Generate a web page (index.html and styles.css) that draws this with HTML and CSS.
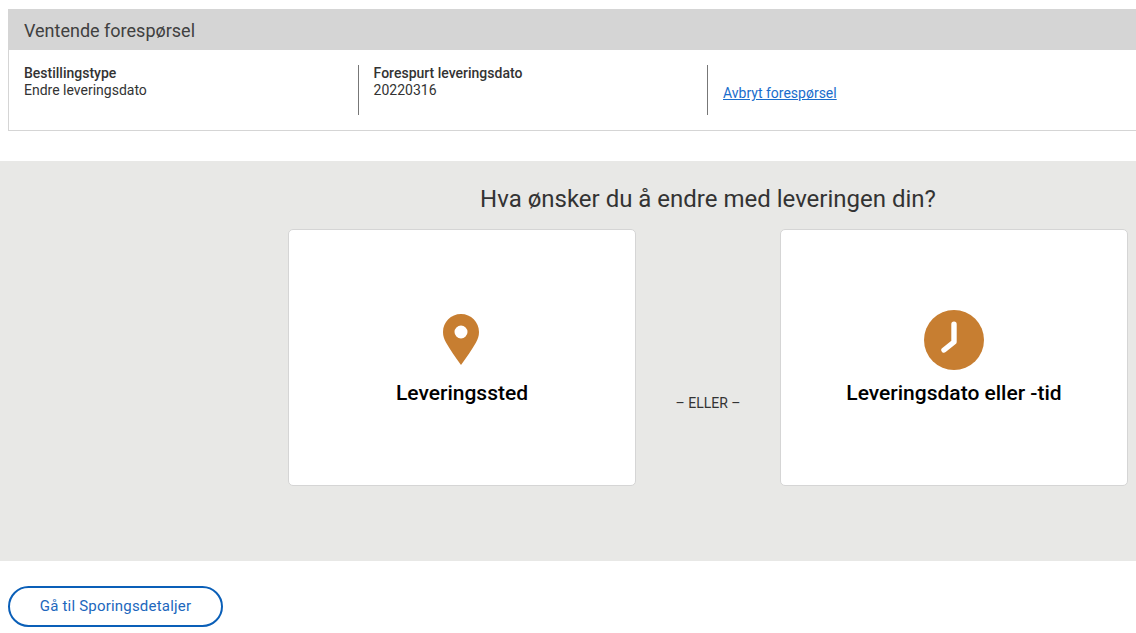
FILE: index.html
```
<!DOCTYPE html>
<html lang="no">
<head>
<meta charset="utf-8">
<title>Endre levering</title>
<link rel="stylesheet" href="styles.css">
</head>
<body>
<section class="pending">
  <h2 class="pending-head">Ventende forespørsel</h2>
  <div class="pending-body">
    <div class="col col-first">
      <div class="label">Bestillingstype</div>
      <div class="value">Endre leveringsdato</div>
    </div>
    <div class="col">
      <div class="label">Forespurt leveringsdato</div>
      <div class="value">20220316</div>
    </div>
    <div class="col col-link">
      <a class="link" href="#">Avbryt forespørsel</a>
    </div>
  </div>
</section>
<section class="change">
  <h1 class="change-title">Hva ønsker du å endre med leveringen din?</h1>
  <div class="options">
    <a class="card" href="#">
      <svg class="pin" width="36" height="52" viewBox="0 0 36 52" aria-hidden="true">
        <path fill="#c77e31" fill-rule="evenodd" d="M18 0C8 0 0 8 0 18c0 4 1.2 7.4 3 10.5C6.800 35 12.500 43.500 18 51c5.500-7.500 11.200-16 15-22.500 1.800-3.100 3-6.500 3-10.500C36 8 28 0 18 0zm0 11.500a6.500 6.500 0 1 1 0 13 6.500 6.500 0 0 1 0-13z"/>
      </svg>
      <span class="card-label">Leveringssted</span>
    </a>
    <div class="or">– ELLER –</div>
    <a class="card" href="#">
      <svg class="clock" width="60" height="60" viewBox="0 0 60 60" aria-hidden="true">
        <circle cx="30" cy="30" r="30" fill="#c77e31"/>
        <path d="M30 14.200V32L20 40" fill="none" stroke="#fff" stroke-width="5.400" stroke-linecap="round" stroke-linejoin="round"/>
      </svg>
      <span class="card-label">Leveringsdato eller -tid</span>
    </a>
  </div>
</section>
<footer class="actions">
  <a class="btn" href="#">Gå til Sporingsdetaljer</a>
</footer>
</body>
</html>
```
FILE: styles.css
```
* { box-sizing: border-box; }
html, body { margin: 0; padding: 0; height: 633px; overflow: hidden; }
body {
  font-family: Roboto, "Liberation Sans", sans-serif;
  color: #333;
  background: #fff;
  padding-top: 9px;
}
.pending { margin: 0 0 30px 8px; }
.pending-head {
  margin: 0;
  height: 41px;
  padding: 0 16px;
  background: #d5d5d5;
  font-size: 18px;
  font-weight: 400;
  line-height: 43px;
  color: #404040;
}
.pending-body {
  display: flex;
  height: 81px;
  padding: 15px 0 0 0;
  border-left: 1px solid #d5d5d5;
  border-bottom: 1px solid #d5d5d5;
}
.col {
  width: 349px;
  height: 50px;
  padding-left: 14.600px;
  border-left: 1px solid #777;
  font-size: 14px;
  line-height: 17px;
}
.col-first { width: 349px; padding-left: 15px; border-left: 0; }
.label { font-weight: 500; }
.col-link { padding-left: 15px; padding-top: 20px; }
.link { color: #1a6dcc; }
.change {
  height: 400px;
  background: #e8e8e6;
  padding: 22px 8px 0 288px;
}
.change-title {
  margin: 0 0 14px;
  text-align: center;
  font-size: 24px;
  font-weight: 400;
  line-height: 32px;
  color: #333;
}
.options { display: flex; align-items: center; }
.card {
  flex: 0 0 348px;
  height: 257px;
  display: flex;
  flex-direction: column;
  align-items: center;
  justify-content: flex-end;
  padding-bottom: 80px;
  background: #fff;
  border: 1px solid #d5d5d5;
  border-radius: 5px;
  text-decoration: none;
}
.pin { margin: 0 2px 15px 0; }
.clock { margin-bottom: 11px; }
.card-label {
  font-size: 21px;
  font-weight: 500;
  line-height: 24px;
  color: #000;
}
.or {
  flex: 1;
  text-align: center;
  font-size: 14px;
  line-height: 17px;
  margin-top: 92px;
  color: #333;
}
.actions { padding: 25px 0 0 8px; }
.btn {
  display: inline-block;
  width: 215px;
  height: 41px;
  border: 2px solid #0a5fb8;
  border-radius: 21px;
  text-align: center;
  font-size: 15px;
  line-height: 36px;
  letter-spacing: 0.2px;
  color: #2167bd;
  text-decoration: none;
}
```
